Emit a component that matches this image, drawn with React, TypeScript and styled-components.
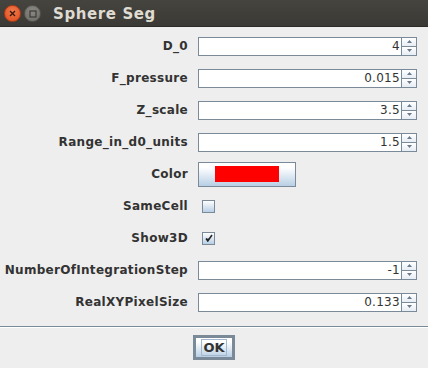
import React from "react";
import styled, { createGlobalStyle } from "styled-components";

const GlobalStyle = createGlobalStyle`
  html, body {
    margin: 0;
    padding: 0;
    background: #eeeeee;
  }
  body {
    font-family: "DejaVu Sans", "Liberation Sans", sans-serif;
  }
`;

const Window = styled.div`
  width: 428px;
  height: 368px;
  display: flex;
  flex-direction: column;
  background: #eeeeee;
  overflow: hidden;
`;

const TitleBar = styled.div`
  height: 27px;
  flex: none;
  display: flex;
  align-items: center;
  padding-left: 4px;
  gap: 3px;
  background: linear-gradient(#45443f, #3a3935);
  border-bottom: 1px solid #2c2b28;
  box-sizing: border-box;
`;

const CircleButton = styled.div<{ $kind: "close" | "min" }>`
  width: 17px;
  height: 17px;
  border-radius: 50%;
  display: flex;
  align-items: center;
  justify-content: center;
  box-sizing: border-box;
  background: ${(p) =>
    p.$kind === "close"
      ? "radial-gradient(circle at 50% 35%, #f07a4c, #df4b1c)"
      : "radial-gradient(circle at 50% 35%, #8a8883, #6d6b66)"};
  border: 1px solid ${(p) => (p.$kind === "close" ? "#b53a13" : "#55534f")};
  margin-top: 1px;
`;

const Title = styled.span`
  margin-left: 9px;
  color: #dfdbd2;
  font-family: "DejaVu Sans", sans-serif;
  font-weight: bold;
  font-size: 15px;
  letter-spacing: 0.6px;
  margin-top: 2px;
`;

const Form = styled.div`
  display: grid;
  grid-template-columns: 188px 1fr;
  grid-auto-rows: 32px;
  column-gap: 10px;
  align-items: center;
  padding: 3px 11px 0 0;
`;

const Label = styled.label`
  justify-self: end;
  font-family: "DejaVu Sans", sans-serif;
  font-weight: bold;
  font-size: 12px;
  letter-spacing: 0.3px;
  color: #333333;
  white-space: nowrap;
`;

const Spinner = styled.div`
  display: flex;
  height: 19px;
`;

const Field = styled.div`
  flex: 1;
  background: #ffffff;
  border: 1px solid #7a8a99;
  box-shadow: inset 1px 1px 0 #ffffff;
  display: flex;
  align-items: center;
  justify-content: flex-end;
  padding-right: 1px;
  font-family: "DejaVu Sans", sans-serif;
  font-size: 12px;
  letter-spacing: 0.3px;
  color: #333333;
`;

const Arrows = styled.div`
  width: 15px;
  display: flex;
  flex-direction: column;
`;

const ArrowButton = styled.div<{ $down?: boolean }>`
  flex: 1;
  border: 1px solid #7a8a99;
  border-left: none;
  border-top: ${(p) => (p.$down ? "none" : "1px solid #7a8a99")};
  background: linear-gradient(#ffffff, #e6edf4);
  display: flex;
  align-items: center;
  justify-content: center;
`;

const ColorButton = styled.div`
  width: 98px;
  height: 25px;
  box-sizing: border-box;
  border: 1px solid #7a8a99;
  background: linear-gradient(#ffffff 20%, #b8cfe5);
  display: flex;
  align-items: center;
  justify-content: center;
`;

const Swatch = styled.div<{ $color: string }>`
  width: 64px;
  height: 16px;
  background: ${(p) => p.$color};
`;

const Check = styled.div`
  width: 13px;
  height: 13px;
  margin-left: 4px;
  box-sizing: border-box;
  border: 1px solid #7a8a99;
  background: linear-gradient(#ffffff, #b8cfe5);
  display: flex;
  align-items: center;
  justify-content: center;
`;

const Separator = styled.div`
  margin-top: 8px;
  height: 1px;
  background: #7a8a99;
  border-bottom: 1px solid #ffffff;
`;

const Footer = styled.div`
  display: flex;
  justify-content: center;
  padding-top: 7px;
`;

const OkButton = styled.button`
  width: 42px;
  height: 25px;
  box-sizing: border-box;
  padding: 0;
  border: 3px solid #7a8a99;
  background: linear-gradient(#ffffff 20%, #b8cfe5);
  display: flex;
  align-items: center;
  justify-content: center;
  font-family: "DejaVu Sans", sans-serif;
  font-weight: bold;
  font-size: 13px;
  color: #333333;
`;

const Focus = styled.span`
  border: 1px solid #a3b8cc;
  padding: 0 1px;
  line-height: 15px;
`;

const Up = () => (
  <svg width="5" height="3" viewBox="0 0 5 3">
    <path d="M2.5 0 L5 3 L0 3 Z" fill="#6a7a89" />
  </svg>
);

const Down = () => (
  <svg width="5" height="3" viewBox="0 0 5 3">
    <path d="M0 0 L5 0 L2.5 3 Z" fill="#6a7a89" />
  </svg>
);

const NumberSpinner: React.FC<{ value: string }> = ({ value }) => (
  <Spinner>
    <Field>{value}</Field>
    <Arrows>
      <ArrowButton>
        <Up />
      </ArrowButton>
      <ArrowButton $down>
        <Down />
      </ArrowButton>
    </Arrows>
  </Spinner>
);

const CheckBox: React.FC<{ checked?: boolean }> = ({ checked }) => (
  <Check>
    {checked && (
      <svg width="8" height="8" viewBox="0 0 8 8">
        <path d="M1 4.5 L2.8 7 L7 1" stroke="#222" strokeWidth="1.5" fill="none" />
        <path d="M1.2 4.8 L2.8 7 L4.5 4.5 Z" fill="#222" />
      </svg>
    )}
  </Check>
);

const App: React.FC = () => {
  return (
    <Window>
      <GlobalStyle />
      <TitleBar>
        <CircleButton $kind="close">
          <svg width="7" height="7" viewBox="0 0 7 7">
            <path d="M1 1 L6 6 M6 1 L1 6" stroke="#3a1a0c" strokeWidth="1.4" />
          </svg>
        </CircleButton>
        <CircleButton $kind="min">
          <svg width="8" height="8" viewBox="0 0 8 8">
            <rect x="1" y="1" width="6" height="6" stroke="#3c3b37" strokeWidth="1.2" fill="none" />
          </svg>
        </CircleButton>
        <Title>Sphere Seg</Title>
      </TitleBar>

      <Form>
        <Label>D_0</Label>
        <NumberSpinner value="4" />

        <Label>F_pressure</Label>
        <NumberSpinner value="0.015" />

        <Label>Z_scale</Label>
        <NumberSpinner value="3.5" />

        <Label>Range_in_d0_units</Label>
        <NumberSpinner value="1.5" />

        <Label>Color</Label>
        <ColorButton>
          <Swatch $color="#ff0000" />
        </ColorButton>

        <Label>SameCell</Label>
        <CheckBox />

        <Label>Show3D</Label>
        <CheckBox checked />

        <Label>NumberOfIntegrationStep</Label>
        <NumberSpinner value="-1" />

        <Label>RealXYPixelSize</Label>
        <NumberSpinner value="0.133" />
      </Form>

      <Separator />
      <Footer>
        <OkButton>
          <Focus>OK</Focus>
        </OkButton>
      </Footer>
    </Window>
  );
};

export default App;
